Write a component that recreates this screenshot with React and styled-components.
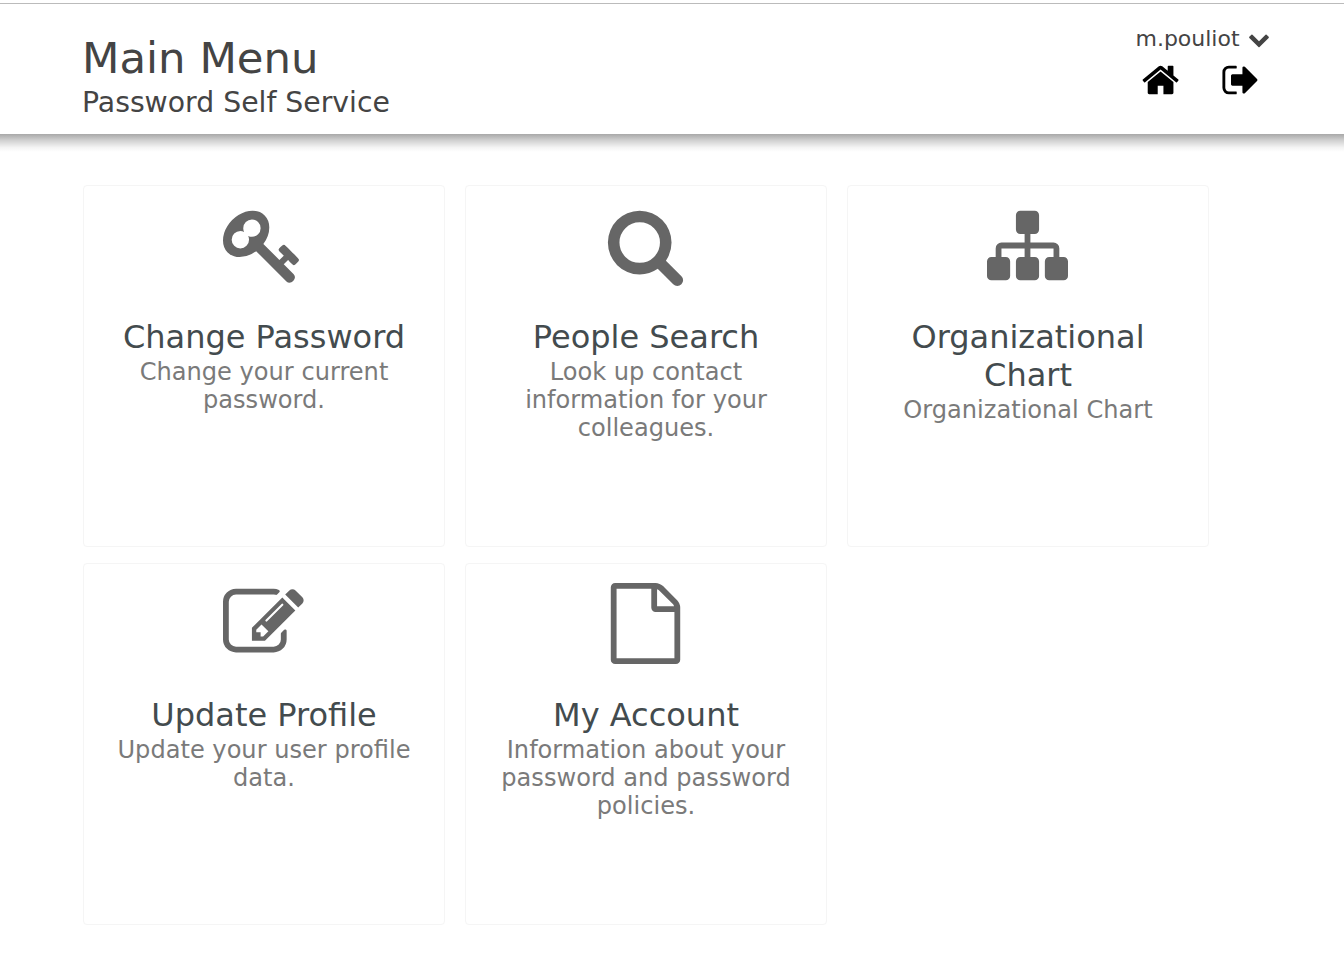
import React from 'react'
import styled, { createGlobalStyle } from 'styled-components'

const GlobalStyle = createGlobalStyle`
  html, body {
    margin: 0;
    padding: 0;
    background: #fff;
    font-family: "DejaVu Sans", Verdana, sans-serif;
  }
`

const Page = styled.div`
  min-height: 964px;
  padding-top: 3px;
  box-sizing: border-box;
`

const Header = styled.header`
  position: relative;
  display: flex;
  justify-content: space-between;
  height: 131px;
  box-sizing: border-box;
  padding: 0 80px 0 82px;
  background: #fff;
  border-top: 1px solid #bbb;

  &::after {
    content: '';
    position: absolute;
    left: 0;
    right: 0;
    top: 100%;
    height: 18px;
    background: linear-gradient(#a8a8a8, #d0d0d0 35%, #f4f4f4 75%, #fff);
  }
`

const Titles = styled.div`
  padding-top: 29px;
  color: #444;
`

const PageTitle = styled.h1`
  margin: 0 0 2px;
  font-size: 43.4px;
  line-height: 50px;
  font-weight: 400;
`

const SubTitle = styled.div`
  font-size: 28.3px;
  line-height: 36px;
`

const UserBlock = styled.div`
  display: flex;
  flex-direction: column;
  align-items: center;
  width: 125px;
  padding-top: 21px;
`

const UserName = styled.div`
  display: flex;
  align-items: center;
  gap: 8px;
  margin-left: 2px;
  font-size: 22px;
  line-height: 28px;
  color: #444;
`

const UserLinks = styled.div`
  display: flex;
  gap: 39px;
  margin-top: 7px;
`

const Icon = styled.svg`
  display: block;
  width: ${p => p.$size}px;
  height: ${p => p.$size}px;
  fill: ${p => p.$color};
`

const Grid = styled.main`
  display: grid;
  grid-template-columns: repeat(3, 362px);
  column-gap: 20px;
  row-gap: 16px;
  padding: 51px 0 0 83px;
`

const Card = styled.a`
  display: flex;
  flex-direction: column;
  align-items: center;
  height: 362px;
  box-sizing: border-box;
  padding: 19px 24px 0;
  border: 1px solid #f5f5f5;
  border-radius: 4px;
  text-align: center;

  ${Icon} {
    margin-right: 1px;
  }
`

const CardTitle = styled.div`
  margin-top: 32px;
  font-size: 32px;
  line-height: 38px;
  color: #434b4e;
`

const CardText = styled.div`
  margin-top: 2px;
  font-size: 24.1px;
  line-height: 28px;
  color: #7a7a7a;
`

const paths = {
  home: 'M1408 992v480q0 26-19 45t-45 19h-384v-384h-256v384h-384q-26 0-45-19t-19-45v-480q0-1 .5-3t.5-3l575-474 575 474q1 2 1 6zm223-69l-62 74q-8 9-21 11h-3q-13 0-21-7l-692-577-692 577q-12 8-24 7-13-2-21-11l-62-74q-8-10-7-23.5t11-21.5l719-599q32-26 76-26t76 26l244 204v-195q0-14 9-23t23-9h192q14 0 23 9t9 23v408l219 182q10 8 11 21.5t-7 23.5z',
  signOut: 'M704 1440q0 4 1 20t.5 26.5-3 23.5-10 19.5-20.5 6.5h-320q-119 0-203.5-84.5t-84.5-203.5v-704q0-119 84.5-203.5t203.5-84.5h320q13 0 22.5 9.5t9.5 22.5q0 4 1 20t.5 26.5-3 23.5-10 19.5-20.5 6.5h-320q-66 0-113 47t-47 113v704q0 66 47 113t113 47h312l11.5 1 11.5 3 8 5.5 7 9 2 13.5zm928-544q0 26-19 45l-544 544q-19 19-45 19t-45-19-19-45v-288h-448q-26 0-45-19t-19-45v-384q0-26 19-45t45-19h448v-288q0-26 19-45t45-19 45 19l544 544q19 19 19 45z',
  chevron: 'M1683 808l-742 741q-19 19-45 19t-45-19l-742-741q-19-19-19-45.5t19-45.5l166-165q19-19 45-19t45 19l531 531 531-531q19-19 45-19t45 19l166 165q19 19 19 45.5t-19 45.5z',
  key: 'M832 512q0-80-56-136t-136-56-136 56-56 136q0 42 19 83-41-19-83-19-80 0-136 56t-56 136 56 136 136 56 136-56 56-136q0-42-19-83 41 19 83 19 80 0 136-56t56-136zm851 704q0 17-49 66t-66 49q-9 0-28.5-16t-36.5-33-38.5-40-24.5-26l-96 96 220 220q28 28 28 68 0 42-39 81t-81 39q-40 0-68-28l-671-671q-176 131-365 131-163 0-265.5-102.5t-102.5-265.5q0-160 95-313t248-248 313-95q163 0 265.5 102.5t102.5 265.5q0 189-131 365l355 355 96-96q-3-3-26-24.5t-40-38.5-33-36.5-16-28.5q0-17 49-66t66-49q13 0 23 10 6 6 46 44.5t82 79.5 86.5 86 73 78 28.5 41z',
  search: 'M1216 832q0-185-131.5-316.5t-316.5-131.5-316.5 131.5-131.5 316.5 131.5 316.5 316.5 131.5 316.5-131.5 131.5-316.5zm512 832q0 52-38 90t-90 38q-54 0-90-38l-343-342q-179 124-399 124-143 0-273.5-55.5t-225-150-150-225-55.5-273.5 55.5-273.5 150-225 225-150 273.5-55.5 273.5 55.5 225 150 150 225 55.5 273.5q0 220-124 399l343 343q37 37 37 90z',
  sitemap: 'M1792 1248v320q0 40-28 68t-68 28h-320q-40 0-68-28t-28-68v-320q0-40 28-68t68-28h96v-192h-512v192h96q40 0 68 28t28 68v320q0 40-28 68t-68 28h-320q-40 0-68-28t-28-68v-320q0-40 28-68t68-28h96v-192h-512v192h96q40 0 68 28t28 68v320q0 40-28 68t-68 28h-320q-40 0-68-28t-28-68v-320q0-40 28-68t68-28h96v-192q0-52 38-90t90-38h512v-192h-96q-40 0-68-28t-28-68v-320q0-40 28-68t68-28h320q40 0 68 28t28 68v320q0 40-28 68t-68 28h-96v192h512q52 0 90 38t38 90v192h96q40 0 68 28t28 68z',
  edit: 'M888 1184l116-116-152-152-116 116v56h96v96h56zm440-720q-16-16-33 1l-350 350q-17 17-1 33t33-1l350-350q17-17 1-33zm80 594v190q0 119-84.5 203.5t-203.5 84.5h-832q-119 0-203.5-84.5t-84.5-203.5v-832q0-119 84.5-203.5t203.5-84.5h832q63 0 117 25 15 7 18 23 3 17-9 29l-49 49q-14 14-32 8-23-6-45-6h-832q-66 0-113 47t-47 113v832q0 66 47 113t113 47h832q66 0 113-47t47-113v-126q0-13 9-22l64-64q15-15 35-7t20 29zm-96-738l288 288-672 672h-288v-288zm444 132l-92 92-288-288 92-92q28-28 68-28t68 28l152 152q28 28 28 68t-28 68z',
  file: 'M1596 380q28 28 48 76t20 88v1152q0 40-28 68t-68 28h-1344q-40 0-68-28t-28-68v-1600q0-40 28-68t68-28h896q40 0 88 20t76 48zm-444-244v376h376q-10-29-22-41l-313-313q-12-12-41-22zm384 1528v-1024h-416q-40 0-68-28t-28-68v-416h-768v1536h1280z',
}

const FaIcon = ({ name, size, color }) => (
  <Icon viewBox='0 0 1792 1792' $size={size} $color={color}>
    <path d={paths[name]} />
  </Icon>
)

const modules = [
  { icon: 'key', title: 'Change Password', text: 'Change your current password.' },
  { icon: 'search', title: 'People Search', text: 'Look up contact information for your colleagues.' },
  { icon: 'sitemap', title: 'Organizational Chart', text: 'Organizational Chart' },
  { icon: 'edit', title: 'Update Profile', text: 'Update your user profile data.' },
  { icon: 'file', title: 'My Account', text: 'Information about your password and password policies.' },
]

export default function App () {
  return (
    <Page>
      <GlobalStyle />
      <Header>
        <Titles>
          <PageTitle>Main Menu</PageTitle>
          <SubTitle>Password Self Service</SubTitle>
        </Titles>
        <UserBlock>
          <UserName>
            m.pouliot
            <FaIcon name='chevron' size={22} color='#444' />
          </UserName>
          <UserLinks>
            <FaIcon name='home' size={40} color='#000' />
            <FaIcon name='signOut' size={40} color='#000' />
          </UserLinks>
        </UserBlock>
      </Header>
      <Grid>
        {modules.map(m => (
          <Card key={m.title}>
            <FaIcon name={m.icon} size={81} color='#666' />
            <CardTitle>{m.title}</CardTitle>
            <CardText>{m.text}</CardText>
          </Card>
        ))}
      </Grid>
    </Page>
  )
}
